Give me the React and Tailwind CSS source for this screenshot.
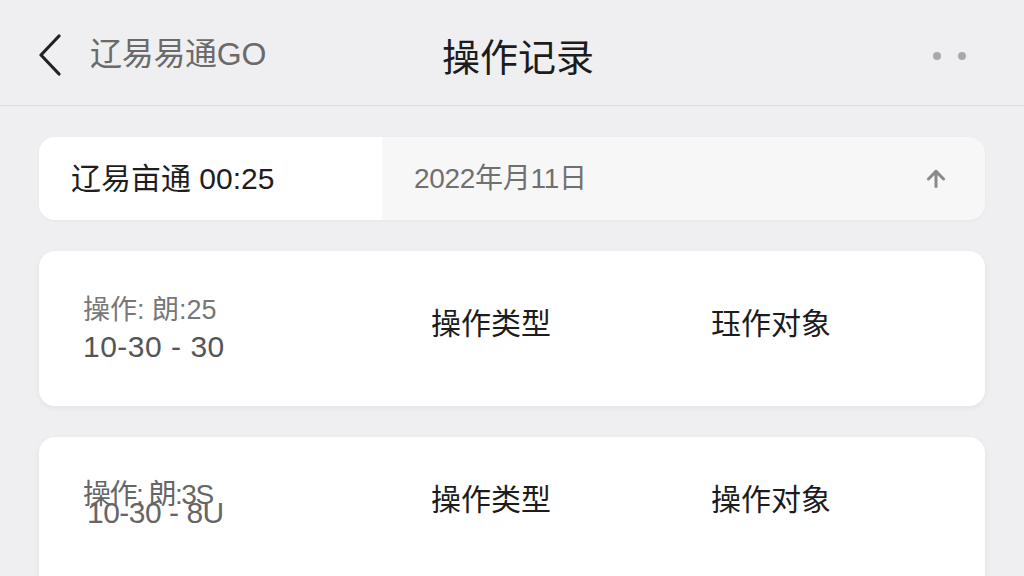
import { ArrowUp } from "lucide-react"

const font = { fontFamily: '"Liberation Sans", "Noto Sans CJK SC", "Noto Sans", sans-serif' }

function Header() {
  return (
    <div className="relative flex h-[106px] items-center border-b border-[#dcdcde] px-[38px]">
      <svg width="24" height="42" viewBox="0 0 24 42" className="mt-[4px] shrink-0">
        <polyline points="21,2 3,21 21,40" fill="none" stroke="#222" strokeWidth="3.2" strokeLinecap="round" strokeLinejoin="round" />
      </svg>
      <span className="ml-[28px] mt-[2px] text-[32px] tracking-[-0.3px] text-[#6a6a6a]">辽易易通GO</span>
      <h1 className="absolute left-1/2 top-[30px] -translate-x-[70px] text-[38px] font-normal text-[#1c1c1c]">操作记录</h1>
      <div className="ml-auto mr-[20px] mt-[6px] flex gap-[17px]">
        <span className="h-[8px] w-[8px] rounded-full bg-[#a9a9ab]" />
        <span className="h-[8px] w-[8px] rounded-full bg-[#a9a9ab]" />
      </div>
    </div>
  )
}

function Summary() {
  return (
    <div className="flex h-[83px] overflow-hidden rounded-[16px] bg-[#f7f7f8] shadow-[0_1px_3px_rgba(0,0,0,0.04)]">
      <div className="flex w-[343px] items-center bg-white pl-[32px] text-[30px] text-[#1e1e1e]">辽易亩通 00:25</div>
      <div className="flex flex-1 items-center pl-[32px] pr-[36px]">
        <span className="text-[28px] tracking-[-0.3px] text-[#707070]">2022年月11日</span>
        <ArrowUp className="ml-auto" size={26} color="#8a8a8a" strokeWidth={2.8} />
      </div>
    </div>
  )
}

function RecordCard({ line1, line2, type, target, tight }) {
  return (
    <div className="grid h-[155px] grid-cols-[348px_280px_1fr] items-center rounded-[16px] bg-white pl-[44px] shadow-[0_2px_6px_rgba(0,0,0,0.05)]">
      {tight ? (
        <div className="-mt-[20px] flex flex-col leading-[0.8] text-[#666]">
          <span className="text-[28px] tracking-[-1.5px]">{line1}</span>
          <span className="-mt-[6px] ml-[4px] text-[30px] tracking-[-0.5px]">{line2}</span>
        </div>
      ) : (
        <div className="flex flex-col">
          <span className="mt-[2px] text-[27px] leading-[34px] text-[#777]">{line1}</span>
          <span className="text-[30px] leading-[40px] tracking-[0.5px] text-[#555]">{line2}</span>
        </div>
      )}
      <span className={(tight ? "-mt-[30px]" : "-mt-[10px]") + " text-[30px] text-[#1c1c1c]"}>{type}</span>
      <span className={(tight ? "-mt-[30px]" : "-mt-[10px]") + " text-[30px] text-[#1c1c1c]"}>{target}</span>
    </div>
  )
}

export default function App() {
  return (
    <div className="h-[576px] w-[1024px] overflow-hidden bg-[#efeff1]" style={font}>
      <Header />
      <div className="flex flex-col gap-[31px] px-[39px] pt-[31px]">
        <Summary />
        <RecordCard line1="操作: 朗:25" line2="10-30 - 30" type="操作类型" target="珏作对象" />
        <RecordCard line1="操作: 朗:3S" line2="10-30 - 8U" type="操作类型" target="操作对象" tight />
      </div>
    </div>
  )
}
